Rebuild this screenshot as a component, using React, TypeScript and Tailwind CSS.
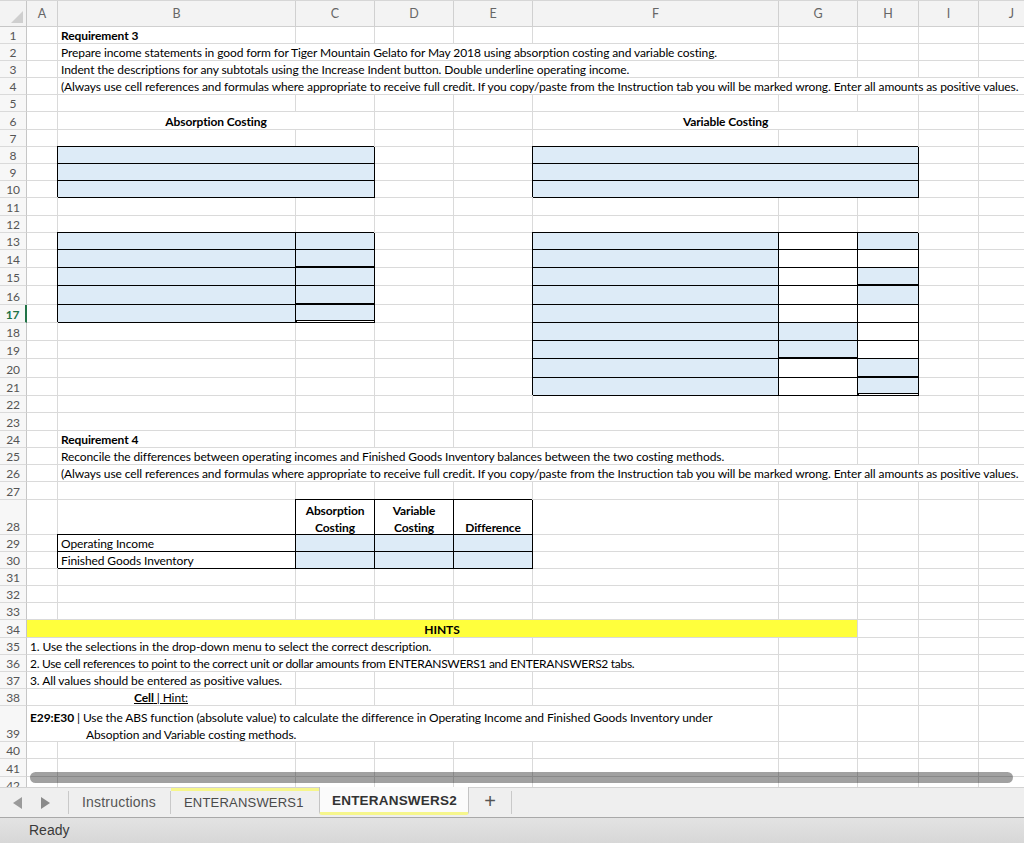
import React from "react";

type Kind = "g" | "b" | "w" | "y";
type Bot = "n" | "t" | "d";

const KIND: Record<Kind, string> = {
  g: "border-r border-[#dadada]",
  b: "bg-[#ddebf7] border-r border-black shadow-[-1px_-1px_0_0_#000]",
  w: "bg-white border-r border-black shadow-[-1px_-1px_0_0_#000]",
  y: "bg-[#ffff3c] border-r border-[#dadada]",
};
const BOT: Record<Bot, string> = {
  n: "border-b",
  t: "border-b-2",
  d: "border-b-[3px] border-double bg-clip-padding",
};

const W = {
  A: "w-[31px]",
  B: "w-[238px]",
  C: "w-[79px]",
  D: "w-[79px]",
  E: "w-[79px]",
  F: "w-[246px]",
  G: "w-[79px]",
  H: "w-[61px]",
  I: "w-[60px]",
  J: "w-[66px]",
  BC: "w-[317px]",
  BF: "w-[721px]",
  BJ: "w-[987px]",
  FH: "w-[386px]",
  AG: "w-[831px]",
  AD: "w-[427px]",
  AF: "w-[752px]",
  AB: "w-[269px]",
};

function Cell({
  w,
  k = "g",
  b = "n",
  cls = "",
  children,
}: {
  w: string;
  k?: Kind;
  b?: Bot;
  cls?: string;
  children?: React.ReactNode;
}) {
  return (
    <div className={`shrink-0 ${w} ${KIND[k]} ${BOT[b]} ${cls}`}>{children}</div>
  );
}

function Row({
  h,
  n,
  active = false,
  children,
}: {
  h: string;
  n: string;
  active?: boolean;
  children?: React.ReactNode;
}) {
  return (
    <div className={`flex shrink-0 ${h}`}>
      <div
        className={`w-[27px] shrink-0 flex items-end justify-center bg-[#f7f7f7] border-b border-b-[#dadada] leading-[14px] ${
          active
            ? "border-r-2 border-r-[#217346] text-[#217346] font-bold"
            : "border-r border-r-[#c6c6c6] text-[#555]"
        }`}
      >
        {n}
      </div>
      {children}
    </div>
  );
}

const cols = ["A", "B", "C", "D", "E", "F", "G", "H", "I", "J"] as const;

function Plain({ h, n, active }: { h: string; n: string; active?: boolean }) {
  return (
    <Row h={h} n={n} active={active}>
      {cols.map((c) => (
        <Cell key={c} w={W[c]} />
      ))}
    </Row>
  );
}

const txt = "flex items-end leading-[14px] px-[3px] whitespace-nowrap text-black";

const H1 = "h-[17.2px]";
const H2 = "h-[18.25px]";
const H3 = "h-[17.3px]";
const H4 = "h-[17.15px]";

type Tri = [Kind, Bot];

function Tbl({
  n,
  h,
  left,
  right,
  active,
}: {
  n: string;
  h: string;
  left?: [Tri, Tri] | null;
  right?: [Tri, Tri, Tri] | null;
  active?: boolean;
}) {
  return (
    <Row h={h} n={n} active={active}>
      <Cell w={W.A} />
      {left ? (
        <>
          <Cell w={W.B} k={left[0][0]} b={left[0][1]} />
          <Cell w={W.C} k={left[1][0]} b={left[1][1]} />
        </>
      ) : (
        <>
          <Cell w={W.B} />
          <Cell w={W.C} />
        </>
      )}
      <Cell w={W.D} />
      <Cell w={W.E} />
      {right ? (
        <>
          <Cell w={W.F} k={right[0][0]} b={right[0][1]} />
          <Cell w={W.G} k={right[1][0]} b={right[1][1]} />
          <Cell w={W.H} k={right[2][0]} b={right[2][1]} />
        </>
      ) : (
        <>
          <Cell w={W.F} />
          <Cell w={W.G} />
          <Cell w={W.H} />
        </>
      )}
      <Cell w={W.I} />
      <Cell w={W.J} />
    </Row>
  );
}

function Corner() {
  return (
    <div className="w-[27px] shrink-0 bg-[#f3f3f3] border-r border-b border-[#c6c6c6] relative">
      <svg className="absolute right-[3px] bottom-[3px]" width="12" height="12" viewBox="0 0 12 12">
        <polygon points="12,0 12,12 0,12" fill="#cfcfcf" />
      </svg>
    </div>
  );
}

const head2 = "flex flex-col items-center justify-end leading-[17px] font-bold text-center";

export default function App() {
  const BB: Tri = ["b", "n"];
  const BT: Tri = ["b", "t"];
  const BD: Tri = ["b", "d"];
  const WW: Tri = ["w", "n"];
  return (
    <div className="w-[1024px] h-[843px] overflow-hidden flex flex-col bg-white font-['Lato',sans-serif] text-[12px] tracking-[-0.1px]">
      {/* grid */}
      <div className="relative h-[787px] shrink-0 overflow-hidden flex flex-col">
        {/* column header */}
        <div className="flex shrink-0 h-[26.5px] border-t border-[#d6d6d6]">
          <Corner />
          {cols.map((c) => (
            <div
              key={c}
              className={`shrink-0 ${W[c]} bg-[#f3f3f3] border-r border-b border-[#d0d0d0] flex items-center justify-center pt-[3px] text-[#666] text-[12.5px] tracking-normal`}
            >
              {c}
            </div>
          ))}
        </div>

        <Row h={H1} n="1">
          <Cell w={W.A} />
          <Cell w={W.B} cls={`${txt} font-bold`}>Requirement 3</Cell>
          {(["C", "D", "E", "F", "G", "H", "I", "J"] as const).map((c) => (
            <Cell key={c} w={W[c]} />
          ))}
        </Row>
        <Row h={H1} n="2">
          <Cell w={W.A} />
          <Cell w={W.BF} cls={txt}>
            Prepare income statements in good form for Tiger Mountain Gelato for May 2018 using absorption costing and variable costing.
          </Cell>
          <Cell w={W.G} />
          <Cell w={W.H} />
          <Cell w={W.I} />
          <Cell w={W.J} />
        </Row>
        <Row h={H1} n="3">
          <Cell w={W.A} />
          <Cell w={W.BF} cls={txt}>
            Indent the descriptions for any subtotals using the Increase Indent button. Double underline operating income.
          </Cell>
          <Cell w={W.G} />
          <Cell w={W.H} />
          <Cell w={W.I} />
          <Cell w={W.J} />
        </Row>
        <Row h={H1} n="4">
          <Cell w={W.A} />
          <Cell w={W.BJ} cls={txt}>
            (Always use cell references and formulas where appropriate to receive full credit. If you copy/paste from the Instruction tab you will be marked wrong. Enter all amounts as positive values.
          </Cell>
        </Row>
        <Plain h={H1} n="5" />
        <Row h={H1} n="6">
          <Cell w={W.A} />
          <Cell w={W.BC} cls={`${txt} justify-center font-bold`}>Absorption Costing</Cell>
          <Cell w={W.D} />
          <Cell w={W.E} />
          <Cell w={W.FH} cls={`${txt} justify-center font-bold`}>Variable Costing</Cell>
          <Cell w={W.I} />
          <Cell w={W.J} />
        </Row>
        <Plain h={H1} n="7" />
        {["8", "9", "10"].map((n) => (
          <Row key={n} h={H1} n={n}>
            <Cell w={W.A} />
            <Cell w={W.BC} k="b" />
            <Cell w={W.D} />
            <Cell w={W.E} />
            <Cell w={W.FH} k="b" />
            <Cell w={W.I} />
            <Cell w={W.J} />
          </Row>
        ))}
        <Plain h={H1} n="11" />
        <Plain h={H1} n="12" />
        <Tbl n="13" h={H1} left={[BB, BB]} right={[BB, WW, BB]} />
        <Tbl n="14" h={H2} left={[BB, BT]} right={[BB, WW, WW]} />
        <Tbl n="15" h={H2} left={[BB, BB]} right={[BB, WW, BT]} />
        <Tbl n="16" h={H2} left={[BB, BT]} right={[BB, WW, BB]} />
        <Tbl n="17" h={H2} left={[BB, BD]} right={[BB, WW, WW]} active />
        <Tbl n="18" h={H2} right={[BB, BB, WW]} />
        <Tbl n="19" h={H2} right={[BB, BT, WW]} />
        <Tbl n="20" h={H2} right={[BB, WW, BT]} />
        <Tbl n="21" h={H2} right={[BB, WW, BD]} />
        <Plain h={H3} n="22" />
        <Plain h={H3} n="23" />
        <Row h={H3} n="24">
          <Cell w={W.A} />
          <Cell w={W.B} cls={`${txt} font-bold`}>Requirement 4</Cell>
          {(["C", "D", "E", "F", "G", "H", "I", "J"] as const).map((c) => (
            <Cell key={c} w={W[c]} />
          ))}
        </Row>
        <Row h={H3} n="25">
          <Cell w={W.A} />
          <Cell w={W.BF} cls={txt}>
            Reconcile the differences between operating incomes and Finished Goods Inventory balances between the two costing methods.
          </Cell>
          <Cell w={W.G} />
          <Cell w={W.H} />
          <Cell w={W.I} />
          <Cell w={W.J} />
        </Row>
        <Row h={H3} n="26">
          <Cell w={W.A} />
          <Cell w={W.BJ} cls={txt}>
            (Always use cell references and formulas where appropriate to receive full credit. If you copy/paste from the Instruction tab you will be marked wrong. Enter all amounts as positive values.
          </Cell>
        </Row>
        <Plain h={H3} n="27" />
        <Row h="h-[35px]" n="28">
          <Cell w={W.A} />
          <Cell w={W.B} />
          <Cell w={W.C} k="w" cls={head2}>
            <div className="translate-y-[2px] flex flex-col items-center">
              <span>Absorption</span>
              <span>Costing</span>
            </div>
          </Cell>
          <Cell w={W.D} k="w" cls={head2}>
            <div className="translate-y-[2px] flex flex-col items-center">
              <span>Variable</span>
              <span>Costing</span>
            </div>
          </Cell>
          <Cell w={W.E} k="w" cls={head2}>
            <div className="translate-y-[2px]">Difference</div>
          </Cell>
          <Cell w={W.F} />
          <Cell w={W.G} />
          <Cell w={W.H} />
          <Cell w={W.I} />
          <Cell w={W.J} />
        </Row>
        {[
          ["29", "Operating Income"],
          ["30", "Finished Goods Inventory"],
        ].map(([n, label]) => (
          <Row key={n} h={H4} n={n}>
            <Cell w={W.A} />
            <Cell w={W.B} k="w" cls={txt}>
              {label}
            </Cell>
            <Cell w={W.C} k="b" />
            <Cell w={W.D} k="b" />
            <Cell w={W.E} k="b" />
            <Cell w={W.F} />
            <Cell w={W.G} />
            <Cell w={W.H} />
            <Cell w={W.I} />
            <Cell w={W.J} />
          </Row>
        ))}
        <Plain h={H4} n="31" />
        <Plain h={H4} n="32" />
        <Plain h={H4} n="33" />
        <Row h={H4} n="34">
          <Cell w={W.AG} k="y" cls={`${txt} justify-center font-bold`}>HINTS</Cell>
          <Cell w={W.H} />
          <Cell w={W.I} />
          <Cell w={W.J} />
        </Row>
        <Row h={H4} n="35">
          <Cell w={W.AD} cls={txt}>
            1. Use the selections in the drop-down menu to select the correct description.
          </Cell>
          <Cell w={W.E} />
          <Cell w={W.F} />
          <Cell w={W.G} />
          <Cell w={W.H} />
          <Cell w={W.I} />
          <Cell w={W.J} />
        </Row>
        <Row h={H4} n="36">
          <Cell w={W.AF} cls={`${txt} tracking-[-0.3px]`}>
            2. Use cell references to point to the correct unit or dollar amounts from ENTERANSWERS1 and ENTERANSWERS2 tabs.
          </Cell>
          <Cell w={W.G} />
          <Cell w={W.H} />
          <Cell w={W.I} />
          <Cell w={W.J} />
        </Row>
        <Row h={H4} n="37">
          <Cell w={W.AB} cls={txt}>
            3. All values should be entered as positive values.
          </Cell>
          {(["C", "D", "E", "F", "G", "H", "I", "J"] as const).map((c) => (
            <Cell key={c} w={W[c]} />
          ))}
        </Row>
        <Row h={H4} n="38">
          <Cell w={W.AB} cls={`${txt} justify-center`}>
            <span className="underline">
              <span className="font-bold">Cell</span> | Hint:
            </span>
          </Cell>
          {(["C", "D", "E", "F", "G", "H", "I", "J"] as const).map((c) => (
            <Cell key={c} w={W[c]} />
          ))}
        </Row>
        <Row h="h-[36px]" n="39">
          <Cell w={W.AF} cls="flex flex-col justify-end leading-[17px] px-[3px] whitespace-nowrap text-black">
            <div className="translate-y-[1.5px]">
              <div>
                <span className="font-bold">E29:E30</span> | Use the ABS function (absolute value) to calculate the difference in Operating Income and Finished Goods Inventory under
              </div>
              <div className="pl-[56px]">Absoption and Variable costing methods.</div>
            </div>
          </Cell>
          <Cell w={W.G} />
          <Cell w={W.H} />
          <Cell w={W.I} />
          <Cell w={W.J} />
        </Row>
        <Plain h={H3} n="40" />
        <Plain h={H3} n="41" />
        <Plain h={H3} n="42" />

        {/* horizontal scrollbar overlay */}
        <div className="absolute left-[30px] top-[772px] w-[983px] h-[11px] rounded-full bg-black/[0.37]" />
      </div>

      {/* sheet tabs */}
      <div className="flex shrink-0 h-[30px] bg-[#efefef] border-t border-[#d2d2d2] font-['Liberation_Sans',sans-serif] text-[#555] tracking-normal">
        <div className="w-[69px] shrink-0 flex items-center my-[3px] border-r border-[#c9c9c9]">
          <svg className="ml-[13px]" width="9" height="12" viewBox="0 0 9 12">
            <polygon points="9,0 9,12 0,6" fill="#9a9a9a" />
          </svg>
          <svg className="ml-[19px]" width="9" height="12" viewBox="0 0 9 12">
            <polygon points="0,0 0,12 9,6" fill="#8a8a8a" />
          </svg>
        </div>
        <div className="w-[102px] shrink-0 flex items-center my-[3px] pl-[13px] border-r border-[#c9c9c9] text-[14px] tracking-[0.2px]">
          Instructions
        </div>
        <div className="w-[148px] shrink-0 flex items-center pl-[13px] border-t-[3px] border-[#f6f68c] pb-[3px] text-[13px] tracking-[0.2px] text-[#4a4a4a]">
          ENTERANSWERS1
        </div>
        <div className="w-[150px] shrink-0 h-[28px] -mt-px flex items-center pl-[12px] pt-[4px] bg-[#fbfbfb] border-l border-r border-[#c4c4c4] border-b-[3px] border-b-[#f6f68c] rounded-b-[3px] font-bold text-[13.5px] tracking-[0.2px] text-[#333]">
          ENTERANSWERS2
        </div>
        <div className="w-[43px] shrink-0 flex items-center justify-center my-[3px] pb-[3px] border-r border-[#c9c9c9] text-[20px] text-[#555] leading-none">
          +
        </div>
      </div>

      {/* status bar */}
      <div className="flex-1 flex items-center pl-[29px] border-t border-[#a9a9a9] bg-gradient-to-b from-[#e3e3e3] to-[#d7d7d7] font-['Liberation_Sans',sans-serif] text-[14px] tracking-normal text-[#3a3a3a]">
        Ready
      </div>
    </div>
  );
}
